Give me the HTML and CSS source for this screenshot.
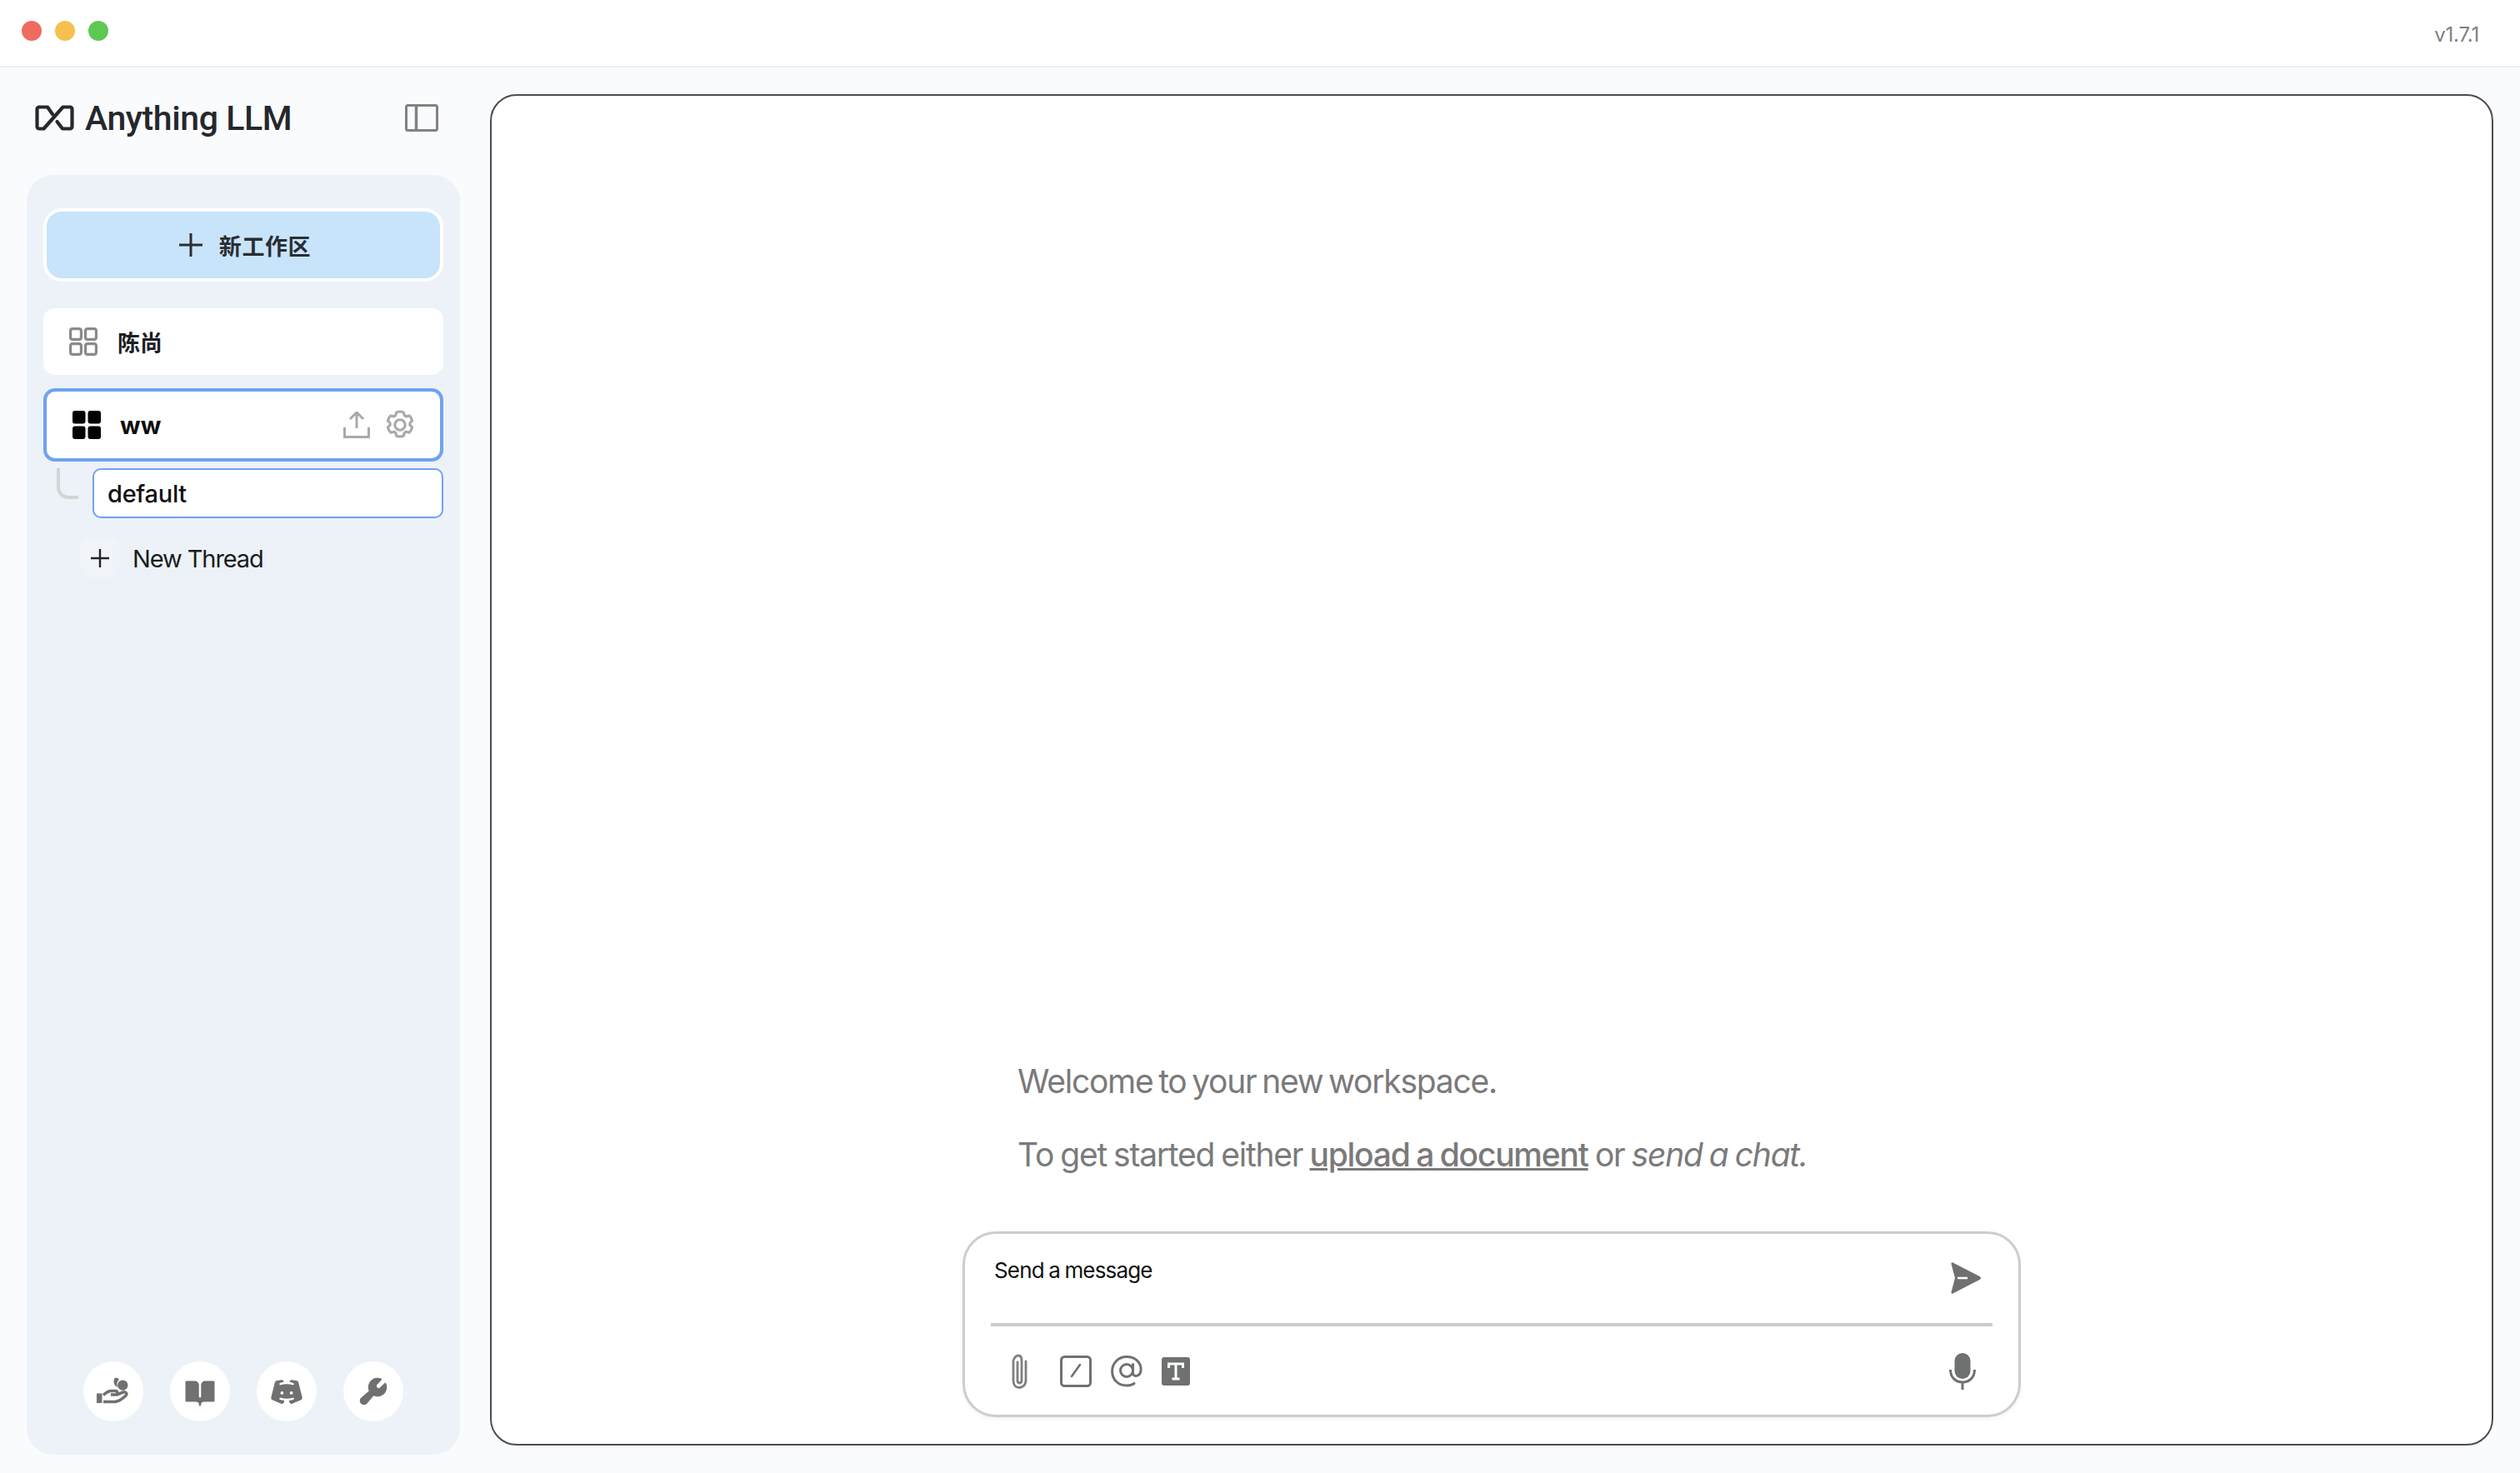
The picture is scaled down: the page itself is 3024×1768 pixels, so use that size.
FILE: index.html
```html
<!DOCTYPE html>
<html lang="en">
<head>
<meta charset="utf-8">
<title>AnythingLLM</title>
<link rel="stylesheet" href="styles.css">
</head>
<body>
<header class="titlebar">
  <div class="lights"><span class="light red"></span><span class="light amber"></span><span class="light green"></span></div>
  <span class="version">v1.7.1</span>
</header>
<div class="app">
  <aside class="side">
    <div class="brand">
      <div class="logo">
        <svg class="logo-mark" viewBox="0 0 47 31"><path d="M21 11 15 2.500H5a2.500 2.500 0 0 0-2.500 2.500v21a2.500 2.500 0 0 0 2.500 2.500h5.500L33.500 2.500H42a2.500 2.500 0 0 1 2.500 2.500v21a2.500 2.500 0 0 1-2.500 2.500h-9L26.500 20" fill="none" stroke="#25282c" stroke-width="4.200" stroke-linecap="round" stroke-linejoin="round"/></svg>
        <span class="logo-text">Anything LLM</span>
      </div>
      <svg class="toggle" viewBox="0 0 40 33"><rect x="1.500" y="1.500" width="37" height="30" rx="2" fill="none" stroke="#828282" stroke-width="3"/><path d="M13.500 2v29" stroke="#828282" stroke-width="3.500"/></svg>
    </div>
    <div class="panel">
      <button class="new-ws">
        <svg class="plus-big" viewBox="0 0 28 28"><path d="M14 0v28M0 14h28" stroke="#2a2e33" stroke-width="3"/></svg>
        <span>新工作区</span>
      </button>
      <div class="ws-row">
        <svg class="ws-icon" viewBox="0 0 34 34"><g fill="none" stroke="#8a8a8a" stroke-width="3.200"><rect x="1.600" y="1.600" width="12.800" height="12.800" rx="2.500"/><rect x="19.600" y="1.600" width="12.800" height="12.800" rx="2.500"/><rect x="1.600" y="19.600" width="12.800" height="12.800" rx="2.500"/><rect x="19.600" y="19.600" width="12.800" height="12.800" rx="2.500"/></g></svg>
        <span class="ws-name">陈尚</span>
      </div>
      <div class="ws-row active">
        <svg class="ws-icon" viewBox="0 0 34 34"><rect width="15.500" height="15.500" rx="3"/><rect x="18.500" width="15.500" height="15.500" rx="3"/><rect y="18.500" width="15.500" height="15.500" rx="3"/><rect x="18.500" y="18.500" width="15.500" height="15.500" rx="3"/></svg>
        <span class="ws-name bold">ww</span>
        <svg class="upload" viewBox="0 0 32 32"><path d="M16 20V2M8 9l8-8 8 8M1.500 19v11.500h29V19" fill="none" stroke="#a9a9a9" stroke-width="3"/></svg>
        <svg class="gear" viewBox="0 0 256 256"><path fill="none" stroke="#a9a9a9" stroke-width="22" stroke-linejoin="round" d="M128 84a44 44 0 1 0 0 88 44 44 0 0 0 0-88ZM128 14c10 0 20 2 30 6l8 28 14 8 28-7c12 12 20 28 24 44l-20 20v16l20 20c-4 16-12 32-24 44l-28-7-14 8-8 28c-20 8-40 8-60 0l-8-28-14-8-28 7c-12-12-20-28-24-44l20-20v-16l-20-20c4-16 12-32 24-44l28 7 14-8 8-28c10-4 20-6 30-6Z"/></svg>
      </div>
      <div class="threads">
        <span class="connector"></span>
        <div class="thread-current">default</div>
        <div class="thread-new">
          <span class="plus-tile"><svg class="plus-small" viewBox="0 0 22 22"><path d="M11 0v22M0 11h22" stroke="#1f2226" stroke-width="2.400"/></svg></span>
          <span>New Thread</span>
        </div>
      </div>
      <div class="foot">
        <span class="round"><svg class="foot-icon" viewBox="-20 -20 40 40"><circle cx="11.300" cy="-7.300" r="6.200"/><path d="M1.500-16C-.5-11 1-7 5-5 3.800-8 4.300-12 7-14.500 5.500-15.800 3.500-16.500 1.500-16Z"/><path d="M-20 2.500h6.500V14H-20Z"/><path fill="none" stroke="#6f7170" stroke-width="3.500" d="M-12 4.500c3.500-3.200 6.500-5 9.500-5H3c2.300 0 2.800 4.500 0 4.500H-3M4 4l8-3c3-1 5 2 3 4-3 3-9 7-13 7.500H-12"/></svg></span>
        <span class="round"><svg class="foot-icon" viewBox="0 0 256 256"><path d="M240 56V200a8 8 0 0 1-8 8H160a24 24 0 0 0-24 23.940 7.900 7.900 0 0 1-5.120 7.550A8 8 0 0 1 120 232a24 24 0 0 0-24-24H24a8 8 0 0 1-8-8V56a8 8 0 0 1 8-8H88a32 32 0 0 1 32 32v87.730a8.170 8.170 0 0 0 7.470 8.250 8 8 0 0 0 8.530-8V80a32 32 0 0 1 32-32h64A8 8 0 0 1 240 56Z"/></svg></span>
        <span class="round"><svg class="foot-icon" viewBox="0 0 256 256"><path d="M247.510 174.390 218 58a16.080 16.080 0 0 0-13-11.880l-36.060-5.920a16.220 16.220 0 0 0-18.260 11.880l-.21.850a4 4 0 0 0 3.270 4.930 155.620 155.620 0 0 1 24.410 5.620 8.200 8.200 0 0 1 5.620 9.700 8 8 0 0 1-10.190 5.640 155.400 155.400 0 0 0-90.800-.1 8.220 8.220 0 0 1-10.280-4.810 8 8 0 0 1 5.080-10.330 156.850 156.850 0 0 1 24.720-5.720 4 4 0 0 0 3.270-4.930l-.21-.85A16.140 16.140 0 0 0 87.080 40.210L51 46.130A16.080 16.080 0 0 0 38 58L8.490 174.390a15.940 15.940 0 0 0 9.060 18.510l67 29.710a16.170 16.170 0 0 0 21.710-9.100l3.490-9.450a4 4 0 0 0-3.270-5.350 158.130 158.130 0 0 1-28.630-6.200 8.200 8.200 0 0 1-5.610-9.670 8 8 0 0 1 10.200-5.660 155.590 155.590 0 0 0 91.120 0 8 8 0 0 1 10.190 5.650 8.190 8.190 0 0 1-5.610 9.680 157.840 157.840 0 0 1-28.620 6.200 4 4 0 0 0-3.270 5.350l3.490 9.450a16.180 16.180 0 0 0 21.710 9.100l67-29.710A15.940 15.940 0 0 0 247.510 174.390ZM92 152a12 12 0 1 1 12-12A12 12 0 0 1 92 152Zm72 0a12 12 0 1 1 12-12A12 12 0 0 1 164 152Z"/></svg></span>
        <span class="round"><svg class="foot-icon" viewBox="0 0 256 256"><path d="M226.760 69a8 8 0 0 0-12.840-2.880l-40.300 37.190-17.230-3.700-3.700-17.230 37.190-40.300A8 8 0 0 0 187 29.240 72 72 0 0 0 88 96a72.340 72.340 0 0 0 6 28.940L33.790 177c-.15.120-.29.260-.43.390a32 32 0 0 0 45.260 45.260c.13-.13.270-.28.390-.42L130.060 162A72 72 0 0 0 232 96a71.560 71.560 0 0 0-5.240-27Z"/></svg></span>
      </div>
    </div>
  </aside>
  <main class="chat">
    <div class="welcome">
      <p class="line-one">Welcome to your new workspace.</p>
      <p class="line-two">To get started either <a class="upload-link">upload a document</a> or <em>send a chat.</em></p>
    </div>
    <form class="prompt">
      <div class="prompt-top">
        <span class="placeholder">Send a message</span>
        <svg class="send" viewBox="0 0 36 40"><path d="M2.500 1.500 34.500 18c2 1.200 2 2.800 0 4L2.500 38.500c-1.300.5-2.200-.3-2-1.500L5 20 .5 3c-.2-1.200 1-2 2-1.500Z" fill="#6f7170"/><path d="M8 20h12" stroke="#fff" stroke-width="2.500"/></svg>
      </div>
      <div class="prompt-bar">
        <svg class="t-clip" viewBox="0 0 20 42"><path d="M8 10v22c0 2 1 3 2.500 3s2.500-1 2.500-3V8c0-3.500-1.500-6-4-6S4.500 4 3 8v24c0 5.500 3 8.500 7 8.500s8-3 8-8.500V9" fill="none" stroke="#7f7f7f" stroke-width="2.800" stroke-linecap="round"/></svg>
        <svg class="t-slash" viewBox="0 0 38 38"><rect x="1.500" y="1.500" width="35" height="35" rx="4" fill="none" stroke="#6f7170" stroke-width="3"/><path d="M14 25 24 11" stroke="#6f7170" stroke-width="2.600" stroke-linecap="round"/></svg>
        <svg class="t-at" viewBox="0 0 38 38"><circle cx="19" cy="18" r="7.500" fill="none" stroke="#6f7170" stroke-width="3"/><path d="M26.500 10.500V21c0 5 8.500 5 9.500-3C37 8 29 1.600 19 1.600S1.600 9 1.600 19 9 36 19 36c4 0 7-1 9-2.500" fill="none" stroke="#6f7170" stroke-width="3" stroke-linecap="round"/></svg>
        <svg class="t-text" viewBox="0 0 34 34"><rect width="34" height="34" rx="3" fill="#6f7170"/><path d="M8.500 13V8h17v5M17 8v18M12.500 26h9" fill="none" stroke="#fff" stroke-width="3"/></svg>
        <svg class="t-mic" viewBox="0 0 32 44"><rect x="6.500" width="19" height="31" rx="9.500" fill="#6f7170"/><path d="M1.500 20c0 9 6 15 14.500 15s14.500-6 14.500-15M16 35v9" fill="none" stroke="#6f7170" stroke-width="3"/></svg>
      </div>
    </form>
  </main>
</div>
</body>
</html>
```
FILE: styles.css
```css
* { box-sizing: border-box; }
html, body { margin: 0; height: 100%; }
body {
  width: 3024px;
  height: 1768px;
  overflow: hidden;
  background: #fafbfd;
  font-family: Inter, "Noto Sans CJK SC", sans-serif;
  color: #111;
}
svg { display: block; flex: none; }
.titlebar {
  height: 81px;
  background: #fff;
  border-bottom: 2px solid #eeeeee;
  display: flex;
  align-items: center;
  justify-content: space-between;
  padding: 0 49px 0 26px;
}
.lights { display: flex; gap: 16px; margin-top: -5px; }
.light { width: 24px; height: 24px; border-radius: 50%; }
.red { background: #ef6b60; }
.amber { background: #f5c04f; }
.green { background: #5fc853; }
.version { font: 400 24px Inter, sans-serif; letter-spacing: -0.2px; color: #808080; margin-bottom: -3px; }
.app { display: flex; height: 1687px; padding-left: 32px; }
.side { width: 520px; display: flex; flex-direction: column; height: 1665px; }
.brand {
  height: 129px;
  padding: 0 26px 0 10px;
  display: flex;
  align-items: flex-start;
  justify-content: space-between;
}
.logo { display: flex; align-items: center; gap: 13px; margin-top: 43px; }
.logo-mark { width: 47px; height: 31px; }
.logo-text { font: 500 41px/31px Roboto, sans-serif; color: #25282c; letter-spacing: -0.4px; margin-top: 3px; }
.toggle { width: 40px; height: 33px; margin-top: 44px; }
.panel {
  flex: 1;
  background: #edf2f9;
  border-radius: 32px;
  padding: 40px 20px 40px 20px;
  display: flex;
  flex-direction: column;
}
.new-ws {
  height: 88px;
  border: 4px solid #fff;
  border-radius: 22px;
  background: #c8e4fb;
  display: flex;
  align-items: center;
  justify-content: center;
  gap: 20px;
  padding: 0 0 0 4px;
  font: 600 27px "Noto Sans CJK SC", sans-serif;
  color: #2a2e33;
  letter-spacing: 0.6px;
  margin-bottom: 32px;
}
.plus-big { width: 28px; height: 28px; }
.ws-row {
  height: 80px;
  background: #fff;
  border-radius: 14px;
  display: flex;
  align-items: center;
  padding-left: 31px;
  margin-bottom: 16px;
}
.ws-row.active {
  height: 88px;
  border: 4px solid #6fa2f1;
  padding-left: 31px;
  margin-bottom: 8px;
}
.ws-icon { width: 34px; height: 34px; margin-right: 24px; }
.active .ws-icon { margin-right: 23px; }
.ws-name { font: 600 27px "Noto Sans CJK SC", sans-serif; color: #1c1f23; }
.ws-name.bold { font: 700 29px Inter, sans-serif; color: #0f0f0f; flex: 1; }
.upload { width: 32px; height: 32px; }
.gear { width: 36px; height: 36px; margin: 0 30px 0 18px; }
.threads { position: relative; padding-left: 59px; flex: 1; }
.connector {
  position: absolute;
  left: 16px;
  top: 0;
  width: 26px;
  height: 37px;
  border-left: 4px solid #d4d4d4;
  border-bottom: 4px solid #d4d4d4;
  border-bottom-left-radius: 14px;
}
.thread-current {
  height: 60px;
  border: 2px solid #6fa2f1;
  border-radius: 10px;
  background: #fff;
  display: flex;
  align-items: center;
  padding-left: 16px;
  font: 500 29px Inter, sans-serif;
  letter-spacing: -0.3px;
  color: #111;
  margin-bottom: 24px;
}
.thread-new {
  display: flex;
  align-items: center;
  gap: 16px;
  margin-left: -15px;
  font: 400 29px Inter, sans-serif;
  letter-spacing: -1.1px;
  color: #1b1d20;
}
.thread-new > span:last-child { margin-top: 2px; }
.plus-tile {
  width: 47px;
  height: 47px;
  border-radius: 12px;
  background: #f0f4f9;
  display: flex;
  align-items: center;
  justify-content: center;
}
.plus-small { width: 22px; height: 22px; }
.foot { display: flex; justify-content: center; gap: 32px; }
.round {
  width: 72px;
  height: 72px;
  border-radius: 50%;
  background: #fff;
  display: flex;
  align-items: center;
  justify-content: center;
}
.foot-icon { width: 40px; height: 40px; fill: #6f7170; }
.chat {
  width: 2404px;
  height: 1622px;
  margin: 32px 0 0 36px;
  background: #fff;
  border: 2px solid #4b4c50;
  border-radius: 32px;
  display: flex;
  flex-direction: column;
  align-items: center;
  justify-content: flex-end;
  padding-bottom: 32px;
}
.welcome { width: 1270px; padding-left: 66px; margin-bottom: 69px; }
.welcome p {
  margin: 42px 0 0;
  font: 400 39px/46px Inter, sans-serif;
  letter-spacing: -1.25px;
  word-spacing: -3px;
  color: #7a7a7a;
}
.welcome .line-two { word-spacing: -1.500px; }
.upload-link { text-decoration: underline; font-weight: 500; }
.prompt {
  width: 1270px;
  height: 223px;
  background: #fff;
  border: 3px solid #cdcdcd;
  border-radius: 40px;
  box-shadow: 0 2px 4px rgba(0,0,0,.06);
  padding: 0 31px;
}
.prompt-top {
  height: 107px;
  border-bottom: 4px solid #cccccc;
  box-sizing: content-box;
  display: flex;
  justify-content: space-between;
  align-items: flex-start;
  padding: 0 14px 0 4px;
}
.placeholder { font: 400 26px/32px Inter, sans-serif; letter-spacing: -0.85px; word-spacing: -1px; color: #111; margin-top: 28px; }
.send { width: 36px; height: 40px; margin-top: 33px; }
.prompt-bar { display: flex; align-items: center; height: 106px; padding: 2px 20px 0 24px; }
.t-clip { width: 20px; height: 42px; margin-right: 39px; }
.t-slash { width: 38px; height: 38px; margin-right: 23px; }
.t-at { width: 38px; height: 38px; margin-right: 23px; }
.t-text { width: 34px; height: 34px; }
.t-mic { width: 32px; height: 44px; margin-left: auto; }
```
